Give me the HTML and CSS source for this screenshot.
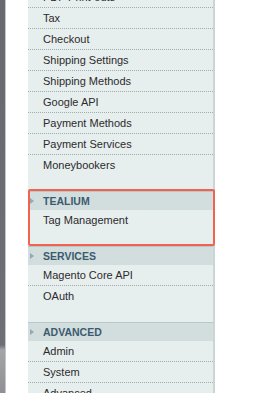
FILE: index.html
```html
<!DOCTYPE html>
<html>
  <head>
    <meta charset="UTF-8" />
    <title>Configuration</title>
    <link rel="stylesheet" href="styles.css">
  </head>
  <body>
    <div class="page">
      <div class="chrome"></div>
      <div class="side-col">
        <ul class="links">
          <li>PDF Print-outs</li>
          <li>Tax</li>
          <li>Checkout</li>
          <li>Shipping Settings</li>
          <li>Shipping Methods</li>
          <li>Google API</li>
          <li>Payment Methods</li>
          <li>Payment Services</li>
          <li>Moneybookers</li>
        </ul>

        <div class="group highlight">
          <div class="group-title">Tealium</div>
          <ul class="links">
            <li>Tag Management</li>
          </ul>
        </div>

        <div class="group">
          <div class="group-title">Services</div>
          <ul class="links">
            <li>Magento Core API</li>
            <li>OAuth</li>
          </ul>
        </div>

        <div class="group">
          <div class="group-title">Advanced</div>
          <ul class="links">
            <li>Admin</li>
            <li>System</li>
            <li>Advanced</li>
            <li>Developer</li>
          </ul>
        </div>
      </div>
    </div>
  </body>
</html>
```

FILE: styles.css
```css
body {
  margin: 0;
  background: #fff;
  font-family: "Liberation Sans", Arial, sans-serif;
}

.page {
  display: flex;
  height: 393px;
  overflow: hidden;
}

/* bit of the window frame on the left */
.chrome {
  width: 5px;
  flex-shrink: 0;
  background: linear-gradient(to bottom, #66696e 0, #6c6f74 345px, #a3a5a8 350px, #8e9094 393px);
  border-right: 1px solid #c4c6c9;
}

.side-col {
  margin-left: 22px;
  margin-top: -13px;
  width: 185px;
  background: #e7eeee;
  border-right: 2px solid #cad6d6;
  align-self: flex-start;
}

.links {
  list-style: none;
  margin: 0;
  padding: 0 0 15px 0;
}

.links li {
  height: 20px;
  line-height: 20px;
  padding-left: 15px;
  font-size: 11px;
  color: #2b2b2b;
  border-bottom: 1px dotted #a3abab;
}

.links li:last-child {
  border-bottom-color: transparent;
}

.group {
  position: relative;
}

.group-title {
  position: relative;
  height: 18px;
  line-height: 18px;
  padding-left: 15px;
  background: #d2dddd;
  border-top: 1px solid #b8c7c8;
  font-size: 10.5px;
  font-weight: bold;
  text-transform: uppercase;
  color: #3b5b6f;
}

.group-title::before {
  content: "";
  position: absolute;
  left: 2px;
  top: 6px;
  border-left: 4px solid #95a8b3;
  border-top: 3px solid transparent;
  border-bottom: 3px solid transparent;
}

/* red box drawn on top of the screenshot */
.highlight::after {
  content: "";
  position: absolute;
  top: -2px;
  left: 0;
  right: -2px;
  bottom: 0;
  border: 2px solid #f1624f;
  border-radius: 2px;
}
```
